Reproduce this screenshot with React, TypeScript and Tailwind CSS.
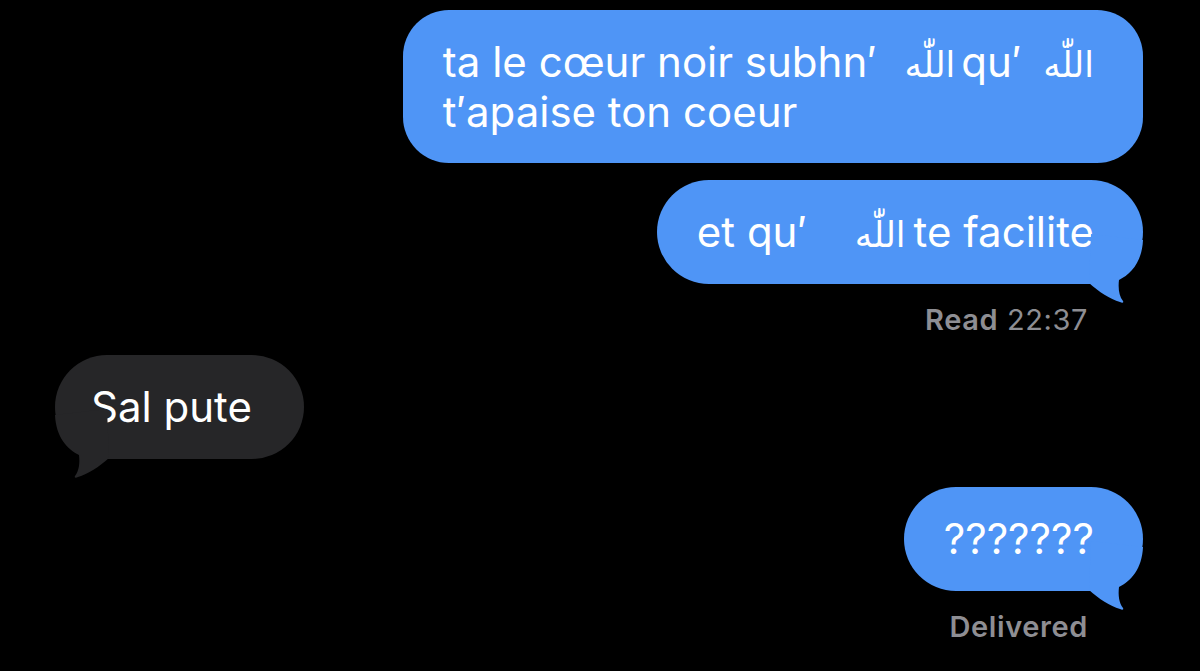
import React from "react";

const FONT = { fontFamily: 'Inter, "DejaVu Sans", "Liberation Sans", sans-serif' };

function Tail({ color, side }: { color: string; side: "left" | "right" }) {
  return (
    <svg
      viewBox="0 0 60 70"
      className={
        side === "right"
          ? "absolute right-0 bottom-[-20px] w-[60px] h-[70px]"
          : "absolute left-0 bottom-[-20px] w-[60px] h-[70px] -scale-x-100"
      }
    >
      <path
        d="M60 6 C59 28 48 40 36 46 C35 54 36 62 40 67 C41 69 39 69 37 68 C27 65 16 58 6 49 L8 0 Z"
        fill={color}
      />
    </svg>
  );
}

// "Allah" spelled out with shadda + dagger alef; zero line-height so it doesn't grow the line
function Allah({ className = "" }: { className?: string }) {
  return (
    <span
      dir="rtl"
      className={`text-[35px] leading-[0] font-normal ${className}`}
      style={{ fontFamily: '"DejaVu Sans", sans-serif' }}
    >
      {"\u0627\u0644\u0644\u0651\u0670\u0647"}
    </span>
  );
}

function Sent({ children, tail, className = "" }: { children: React.ReactNode; tail?: boolean; className?: string }) {
  return (
    <div
      className={`relative self-end bg-[#4f95f6] text-white text-[42px] leading-[50px] whitespace-nowrap pl-[40px] pr-[49px] ${className}`}
    >
      {children}
      {tail && <Tail color="#4f95f6" side="right" />}
    </div>
  );
}

function Receipt({ label, time }: { label: string; time?: string }) {
  return (
    <div className="self-end mr-[55px] text-[29px] leading-[32px] tracking-[0.6px] text-[#8e8e93]">
      <span className="font-semibold">{label}</span>
      {time && <span> {time}</span>}
    </div>
  );
}

export default function App() {
  return (
    <div className="w-[1200px] h-[671px] bg-black overflow-hidden" style={FONT}>
      <div className="flex flex-col pt-[10px] pl-[55px] pr-[57px]">
        <Sent className="rounded-[46px] pt-[27px] pb-[26px]">
          <div>
            ta le cœur noir subhn′<Allah className="ml-[28px] mr-[6px]" />
            qu′
            <Allah className="ml-[22px]" />
          </div>
          <div>t′apaise ton coeur</div>
        </Sent>

        <Sent tail className="rounded-[52px] py-[27px] mt-[17px]">
          et qu′<Allah className="ml-[48px] mr-[8px]" />te facilite
        </Sent>
        <div className="mt-[20px] flex flex-col">
          <Receipt label="Read" time="22:37" />
        </div>

        <div className="mt-[19px] self-start relative bg-[#262628] text-white text-[42px] leading-[50px] rounded-[52px] py-[27px] pl-[36px] pr-[52px]">
          Sal pute
          <Tail color="#262628" side="left" />
        </div>

        <Sent tail className="rounded-[52px] py-[27px] mt-[28px]">
          ???????
        </Sent>
        <div className="mt-[20px] flex flex-col">
          <Receipt label="Delivered" />
        </div>
      </div>
    </div>
  );
}
